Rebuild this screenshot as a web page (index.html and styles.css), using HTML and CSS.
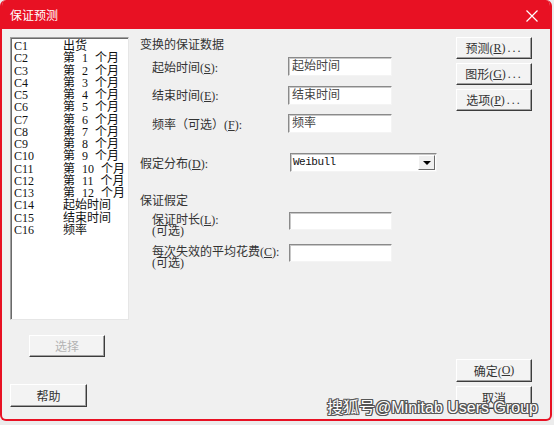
FILE: index.html
```html
<!DOCTYPE html>
<html lang="zh-CN">
<head>
<meta charset="utf-8">
<title>保证预测</title>
<link rel="stylesheet" href="styles.css">
</head>
<body>
<div class="dialog">
  <div class="titlebar">
    <span class="title">保证预测</span>
    <svg class="close" width="12" height="12" viewBox="0 0 12 12"><path d="M0.5 0.5 L11.5 11.5 M11.5 0.5 L0.5 11.5" stroke="#fff" stroke-width="1.2" fill="none"/></svg>
  </div>
  <div class="body">
    <div class="col-left">
      <div class="listbox">
        <div class="item"><span class="code">C1</span><span class="name">出货</span></div>
        <div class="item"><span class="code">C2</span><span class="name">第 1 个月</span></div>
        <div class="item"><span class="code">C3</span><span class="name">第 2 个月</span></div>
        <div class="item"><span class="code">C4</span><span class="name">第 3 个月</span></div>
        <div class="item"><span class="code">C5</span><span class="name">第 4 个月</span></div>
        <div class="item"><span class="code">C6</span><span class="name">第 5 个月</span></div>
        <div class="item"><span class="code">C7</span><span class="name">第 6 个月</span></div>
        <div class="item"><span class="code">C8</span><span class="name">第 7 个月</span></div>
        <div class="item"><span class="code">C9</span><span class="name">第 8 个月</span></div>
        <div class="item"><span class="code">C10</span><span class="name">第 9 个月</span></div>
        <div class="item"><span class="code">C11</span><span class="name">第 10 个月</span></div>
        <div class="item"><span class="code">C12</span><span class="name">第 11 个月</span></div>
        <div class="item"><span class="code">C13</span><span class="name">第 12 个月</span></div>
        <div class="item"><span class="code">C14</span><span class="name">起始时间</span></div>
        <div class="item"><span class="code">C15</span><span class="name">结束时间</span></div>
        <div class="item"><span class="code">C16</span><span class="name">频率</span></div>
      </div>
      <div class="btn btn-select disabled">选择</div>
      <div class="btn btn-help">帮助</div>
    </div>

    <div class="col-mid">
      <div class="group-title">变换的保证数据</div>
      <div class="sub-rows">
        <div class="field-row">
          <span class="label">起始时间(<u>S</u>):</span>
          <div class="input">起始时间</div>
        </div>
        <div class="field-row">
          <span class="label">结束时间(<u>E</u>):</span>
          <div class="input">结束时间</div>
        </div>
        <div class="field-row">
          <span class="label">频率（可选）(<u>F</u>):</span>
          <div class="input">频率</div>
        </div>
      </div>

      <div class="dist-row">
        <span class="label">假定分布(<u>D</u>):</span>
        <div class="combo">
          <span class="combo-text">Weibull</span>
          <span class="combo-btn"><span class="tri"></span></span>
        </div>
      </div>

      <div class="group-title group-2">保证假定</div>
      <div class="warranty-rows">
        <div class="w-row">
          <span class="w-label">保证时长(<u>L</u>):<br>(可选)</span>
          <div class="input w-input"></div>
        </div>
        <div class="w-row">
          <span class="w-label">每次失效的平均花费(<u>C</u>):<br>(可选)</span>
          <div class="input w-input"></div>
        </div>
      </div>
    </div>

    <div class="col-right">
      <div class="btn-stack">
        <div class="btn">预测(<u>R</u>)<span class="dots">...</span></div>
        <div class="btn">图形(<u>G</u>)<span class="dots">...</span></div>
        <div class="btn">选项(<u>P</u>)<span class="dots">...</span></div>
      </div>
      <div class="btn-stack bottom">
        <div class="btn tall">确定(<u>O</u>)</div>
        <div class="btn tall">取消</div>
      </div>
    </div>
  </div>
  <div class="watermark">搜狐号@Minitab Users Group</div>
</div>
</body>
</html>
```

FILE: styles.css
```css
html, body {
  margin: 0;
  padding: 0;
}
body {
  width: 554px;
  height: 425px;
  background: #ececec;
  overflow: hidden;
  font-family: "Liberation Serif", "Noto Sans CJK SC", serif;
  font-size: 12px;
  color: #222;
}
.dialog {
  position: relative;
  width: 552px;
  height: 421px;
  box-sizing: border-box;
  border: 2px solid #e81123;
  border-top: 0;
  border-radius: 6px;
  background: #f0f0f0;
  display: flex;
  flex-direction: column;
  overflow: hidden;
}
.titlebar {
  height: 29px;
  flex: none;
  background: #e81123;
  display: flex;
  align-items: center;
  padding: 0 12px 0 8px;
  color: #fff;
}
.title {
  font-family: "Noto Sans CJK SC", sans-serif;
  font-size: 12px;
  line-height: 14px;
  flex: 1;
}
.close {
  display: block;
  margin-top: 2px;
}
.body {
  flex: 1;
  display: flex;
  padding: 8px 18px 10px 8px;
  min-height: 0;
}
.col-left {
  width: 119px;
  flex: none;
  display: flex;
  flex-direction: column;
}
.listbox {
  height: 283px;
  box-sizing: border-box;
  background: #fff;
  border: 1px solid;
  border-color: #a0a0a0 #e6e6e6 #e6e6e6 #a0a0a0;
  box-shadow: inset 1px 1px 0 #6a6a6a;
  padding: 2px 0 0 3px;
}
.item {
  display: flex;
  line-height: 12.27px;
  height: 12.27px;
  color: #111;
  white-space: nowrap;
}
.code {
  width: 49px;
  flex: none;
}
.name {
  font-family: "Liberation Serif", "Noto Sans CJK SC", serif;
  word-spacing: 4px;
}
.btn {
  width: 76px;
  height: 22px;
  box-sizing: border-box;
  background: #f3f3f3;
  border: 1px solid;
  border-color: #ffffff #3c3c3c #3c3c3c #ffffff;
  box-shadow: inset -1px -1px 0 #a0a0a0;
  display: flex;
  align-items: center;
  justify-content: center;
  color: #333;
  white-space: nowrap;
}
.btn-select {
  margin: 15px 0 0 19px;
}
.disabled {
  color: #b4b4b4;
}
.btn-help {
  margin-top: 27px;
  width: 77px;
  height: 23px;
}
.col-mid {
  flex: 1;
  margin-left: 11px;
  display: flex;
  flex-direction: column;
}
.group-title {
  line-height: 16px;
  height: 16px;
  color: #333;
}
.sub-rows {
  display: flex;
  flex-direction: column;
  gap: 9.5px;
  margin-top: 4px;
  padding-left: 12px;
}
.field-row {
  display: grid;
  grid-template-columns: 136px 104px;
  align-items: center;
  height: 19px;
}
.label {
  color: #333;
  white-space: nowrap;
}
.input {
  height: 19px;
  box-sizing: border-box;
  background: #fff;
  border: 1px solid;
  border-color: #8a8a8a #f4f4f4 #f4f4f4 #8a8a8a;
  box-shadow: inset 1px 1px 0 #c8c8c8;
  padding: 1px 0 0 3px;
  line-height: 14px;
  color: #444;
}
.dist-row {
  display: grid;
  grid-template-columns: 150px 147px;
  align-items: center;
  margin-top: 20px;
  height: 19px;
}
.combo {
  height: 19px;
  box-sizing: border-box;
  background: #fff;
  border: 1px solid;
  border-color: #8a8a8a #f4f4f4 #f4f4f4 #8a8a8a;
  box-shadow: inset 1px 1px 0 #c8c8c8;
  display: flex;
  align-items: stretch;
}
.combo-text {
  flex: 1;
  font-family: "Liberation Mono", monospace;
  font-size: 11px;
  letter-spacing: -0.5px;
  line-height: 16px;
  padding-left: 2px;
  color: #111;
}
.combo-btn {
  width: 17px;
  margin: 1px 1px 1px 0;
  box-sizing: border-box;
  background: #f0f0f0;
  border: 1px solid;
  border-color: #ffffff #6a6a6a #6a6a6a #ffffff;
  display: flex;
  align-items: center;
  justify-content: center;
}
.tri {
  width: 0;
  height: 0;
  border-left: 4px solid transparent;
  border-right: 4px solid transparent;
  border-top: 4px solid #000;
}
.group-2 {
  margin-top: 21px;
}
.warranty-rows {
  display: flex;
  flex-direction: column;
  gap: 7px;
  margin-top: 3px;
  padding-left: 12px;
}
.w-row {
  display: grid;
  grid-template-columns: 137px 103px;
  align-items: start;
  height: 25px;
}
.w-label {
  padding-top: 3px;
  line-height: 11px;
  color: #333;
  white-space: nowrap;
}
.w-input {
  height: 18px;
}
.col-right {
  width: 76px;
  flex: none;
  display: flex;
  flex-direction: column;
  justify-content: space-between;
}
.btn-stack {
  display: flex;
  flex-direction: column;
  gap: 4px;
}
.btn.tall {
  height: 23px;
}
.dots {
  letter-spacing: 2px;
  margin-left: 2px;
}
.watermark {
  position: absolute;
  right: 12px;
  bottom: 1px;
  font-family: "Liberation Sans", "Noto Sans CJK SC", sans-serif;
  font-size: 16px;
  line-height: 20px;
  color: #fff;
  white-space: nowrap;
  text-shadow: 1px 0 0 #555, -1px 0 0 #555, 0 1px 0 #555, 0 -1px 0 #555, 1px 1px 0 #555, -1px -1px 0 #555, 1px -1px 0 #555, -1px 1px 0 #555;
}
```
